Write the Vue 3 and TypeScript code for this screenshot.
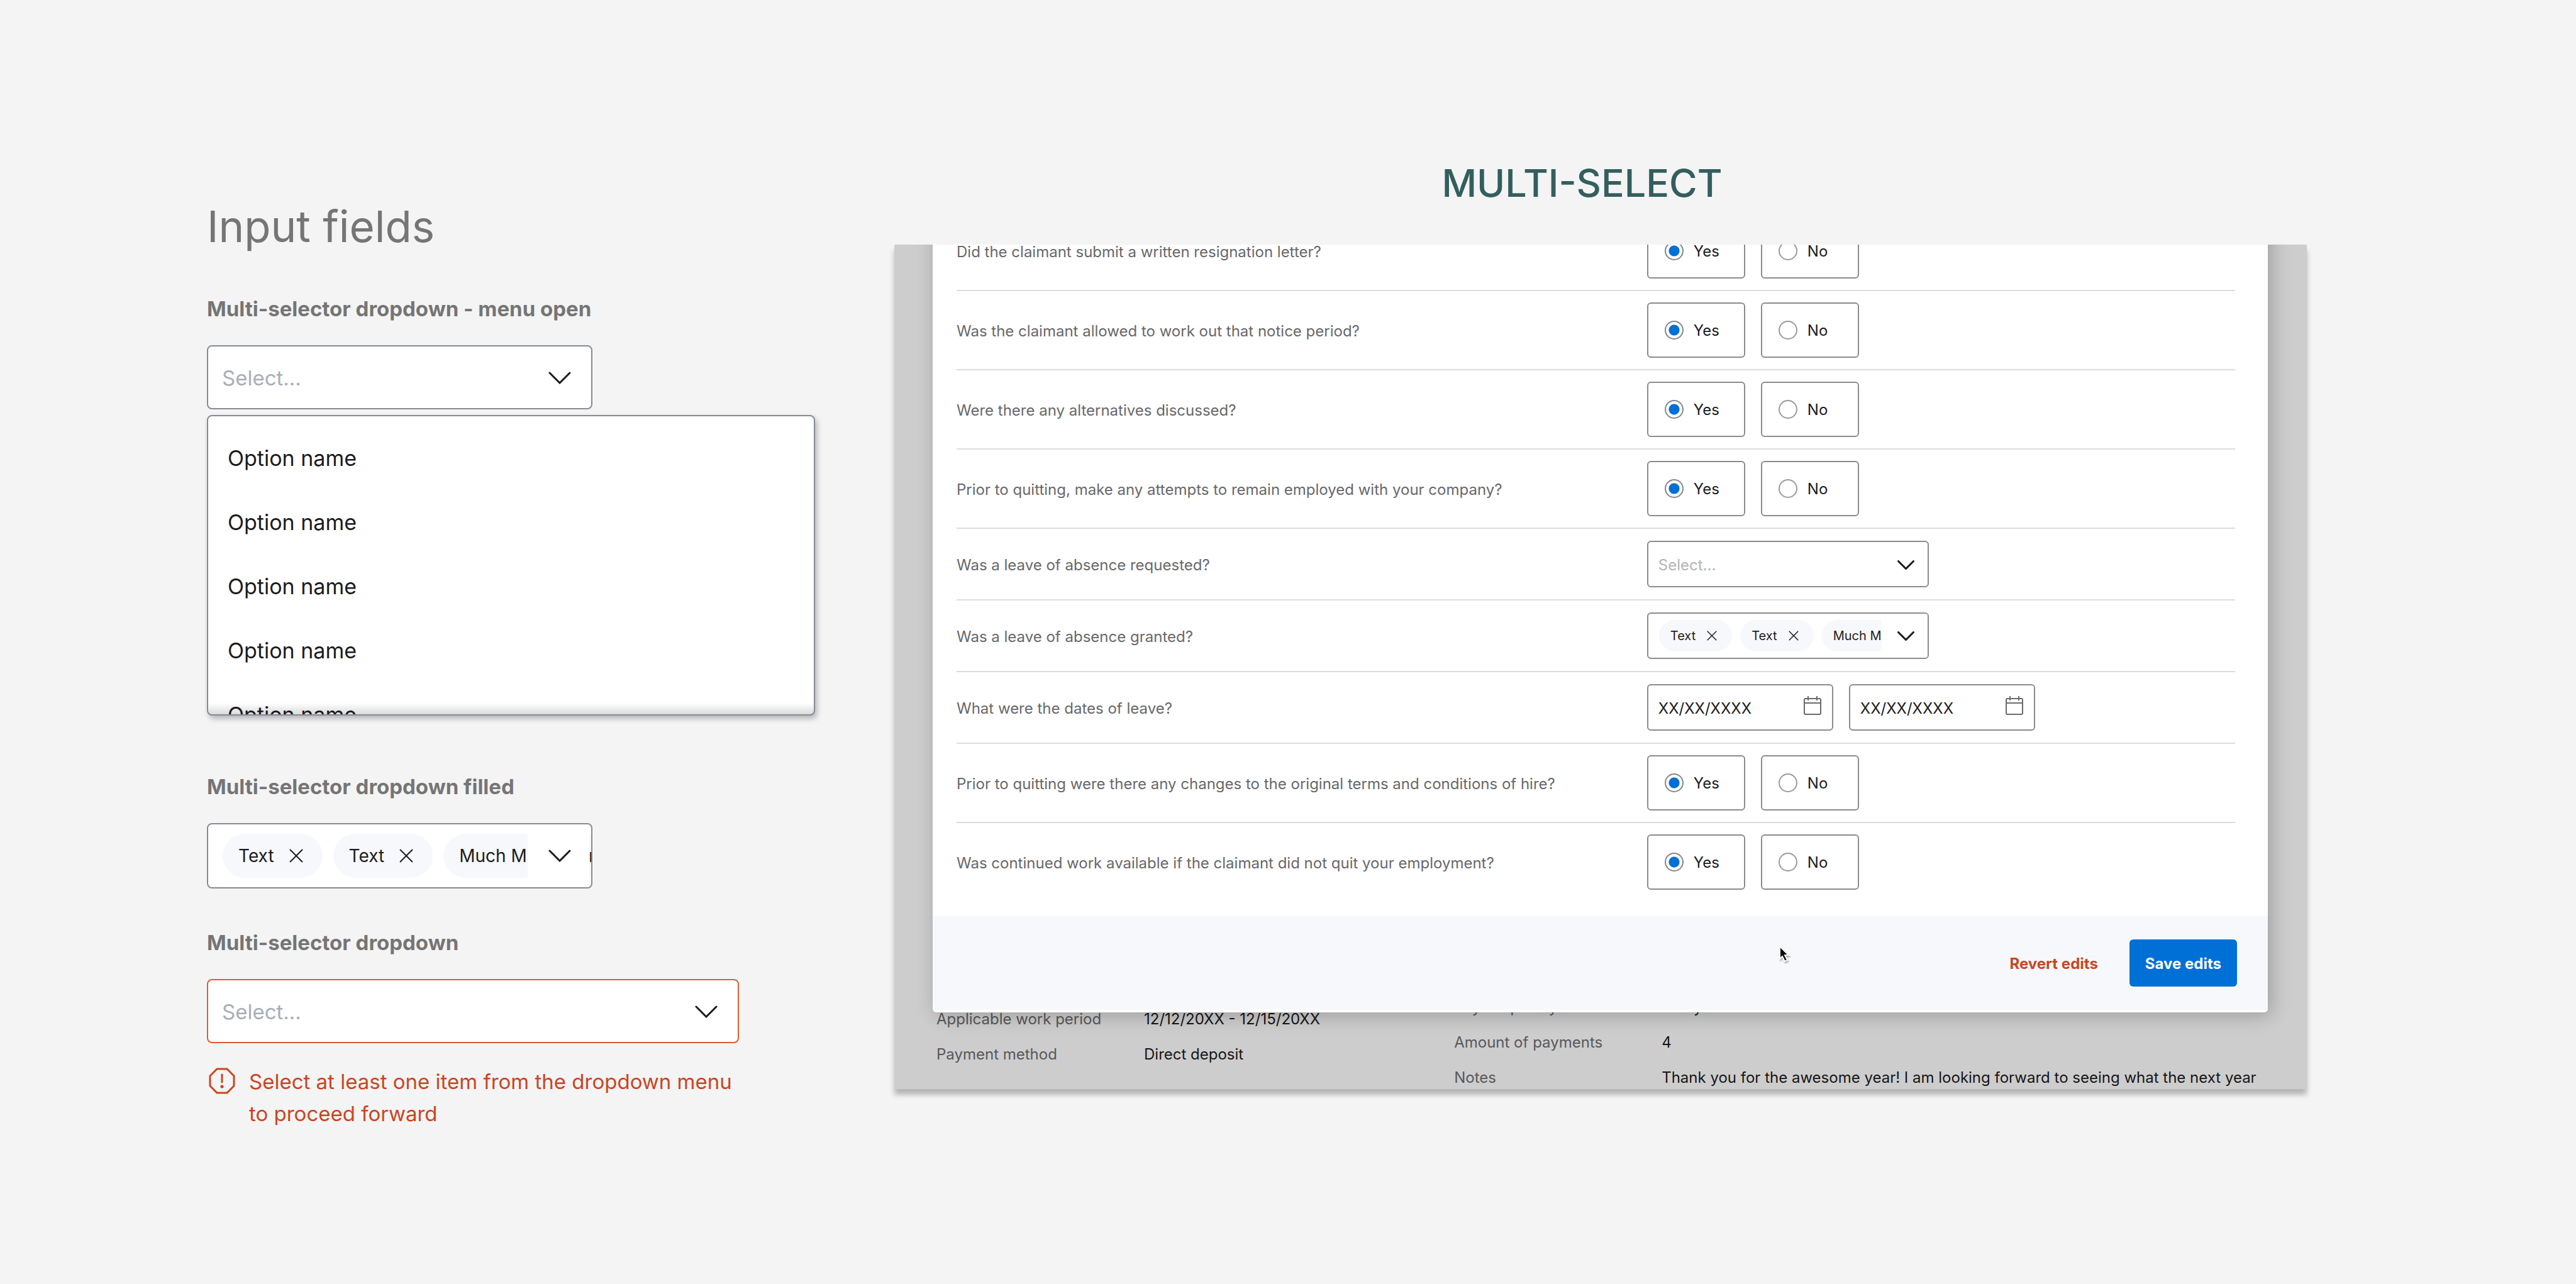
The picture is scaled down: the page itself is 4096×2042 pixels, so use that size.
<script setup lang="ts">
import { ref } from 'vue'

type Kind = 'radio' | 'select' | 'chips' | 'dates'

interface Question {
  id: string
  text: string
  kind: Kind
}

const optionNames: string[] = Array.from({ length: 5 }, () => 'Option name')
const chips: string[] = ['Text', 'Text', 'Much Much more']

const questions: Question[] = [
  { id: 'resignation', text: 'Did the claimant submit a written resignation letter?', kind: 'radio' },
  { id: 'notice', text: 'Was the claimant allowed to work out that notice period?', kind: 'radio' },
  { id: 'alternatives', text: 'Were there any alternatives discussed?', kind: 'radio' },
  { id: 'attempts', text: 'Prior to quitting, make any attempts to remain employed with your company?', kind: 'radio' },
  { id: 'requested', text: 'Was a leave of absence requested?', kind: 'select' },
  { id: 'granted', text: 'Was a leave of absence granted?', kind: 'chips' },
  { id: 'dates', text: 'What were the dates of leave?', kind: 'dates' },
  { id: 'changes', text: 'Prior to quitting were there any changes to the original terms and conditions of hire?', kind: 'radio' },
  { id: 'continued', text: 'Was continued work available if the claimant did not quit your employment?', kind: 'radio' },
]

const answers = ref<Record<string, string>>(
  Object.fromEntries(questions.filter((q) => q.kind === 'radio').map((q) => [q.id, 'Yes'])),
)
const dates = ref<string[]>(['XX/XX/XXXX', 'XX/XX/XXXX'])

const leftDetails: [string, string][] = [
  ['Applicable work period', '12/12/20XX - 12/15/20XX'],
  ['Payment method', 'Direct deposit'],
]
const rightDetails: [string, string][] = [
  ['Pay frequency', 'Every 2 weeks'],
  ['Amount of payments', '4'],
  ['Notes', 'Thank you for the awesome year! I am looking forward to seeing what the next year'],
]
</script>

<template>
  <main class="page">
    <section class="fields">
      <h1 class="title">Input fields</h1>

      <label class="label" for="open-select">Multi-selector dropdown - menu open</label>
      <div class="select-wrap">
        <select id="open-select" class="box select">
          <option>Select...</option>
        </select>
        <svg class="chevron" viewBox="0 0 36 20"><path d="M2 2l16 16L34 2" /></svg>
      </div>
      <ul class="menu" role="listbox" aria-labelledby="open-select">
        <li v-for="(name, i) in optionNames" :key="i" class="option" role="option">{{ name }}</li>
      </ul>

      <span id="filled-label" class="label label-filled">Multi-selector dropdown filled</span>
      <div class="box chip-box" role="group" aria-labelledby="filled-label">
        <span v-for="(chip, i) in chips" :key="i" class="chip">
          {{ chip }}
          <button class="remove" type="button" aria-label="Remove">
            <svg viewBox="0 0 22 22"><path d="M1 1l20 20M21 1L1 21" /></svg>
          </button>
        </span>
        <button class="toggle" type="button" aria-label="Open menu">
          <svg class="chevron" viewBox="0 0 36 20"><path d="M2 2l16 16L34 2" /></svg>
        </button>
      </div>

      <label class="label label-error" for="error-select">Multi-selector dropdown</label>
      <div class="select-wrap wide">
        <select id="error-select" class="box select invalid" aria-describedby="error-text">
          <option>Select...</option>
        </select>
        <svg class="chevron" viewBox="0 0 36 20"><path d="M2 2l16 16L34 2" /></svg>
      </div>
      <div class="error">
        <svg class="error-icon" viewBox="0 0 42 42">
          <path d="M13 2h16l11 11v16L29 40H13L2 29V13z" />
          <path d="M21 11v12" />
          <circle cx="21" cy="30" r="2.6" />
        </svg>
        <p id="error-text" class="error-text">Select at least one item from the dropdown menu to proceed forward</p>
      </div>
    </section>

    <section class="example">
      <h2 class="heading">MULTI-SELECT</h2>
      <div class="backdrop">
        <form class="modal" @submit.prevent>
          <div class="rows">
            <div v-for="q in questions" :key="q.id" class="row">
              <label v-if="q.kind === 'select'" class="question" :for="q.id">{{ q.text }}</label>
              <span v-else :id="`${q.id}-label`" class="question">{{ q.text }}</span>

              <div v-if="q.kind === 'radio'" class="controls" role="radiogroup" :aria-labelledby="`${q.id}-label`">
                <label v-for="choice in ['Yes', 'No']" :key="choice" class="choice">
                  <input v-model="answers[q.id]" class="radio" type="radio" :name="q.id" :value="choice" />
                  {{ choice }}
                </label>
              </div>

              <div v-else-if="q.kind === 'select'" class="controls">
                <div class="select-wrap compact">
                  <select :id="q.id" class="box select">
                    <option>Select...</option>
                  </select>
                  <svg class="chevron" viewBox="0 0 36 20"><path d="M2 2l16 16L34 2" /></svg>
                </div>
              </div>

              <div v-else-if="q.kind === 'chips'" class="controls">
                <div class="box chip-box compact" role="group" :aria-labelledby="`${q.id}-label`">
                  <span v-for="(chip, i) in chips" :key="i" class="chip">
                    {{ chip }}
                    <button class="remove" type="button" aria-label="Remove">
                      <svg viewBox="0 0 22 22"><path d="M1 1l20 20M21 1L1 21" /></svg>
                    </button>
                  </span>
                  <button class="toggle" type="button" aria-label="Open menu">
                    <svg class="chevron" viewBox="0 0 36 20"><path d="M2 2l16 16L34 2" /></svg>
                  </button>
                </div>
              </div>

              <div v-else class="controls">
                <div v-for="(_, i) in dates" :key="i" class="date">
                  <input v-model="dates[i]" class="box date-input" type="text" :aria-labelledby="`${q.id}-label`" />
                  <svg class="calendar" viewBox="0 0 28 30">
                    <path d="M3 4h22a2 2 0 0 1 2 2v21a2 2 0 0 1-2 2H3a2 2 0 0 1-2-2V6a2 2 0 0 1 2-2zM1 11h26M7 0v7M21 0v7" />
                  </svg>
                </div>
              </div>
            </div>
          </div>
          <footer class="footer">
            <button class="revert" type="button">Revert edits</button>
            <button class="save" type="submit">Save edits</button>
            <svg class="cursor" viewBox="0 0 17 26">
              <path d="M1 1v20l4-4 4 8 4-2-4-8h6z" />
            </svg>
          </footer>
        </form>
        <div class="details">
          <dl class="detail-list left">
            <template v-for="[term, value] in leftDetails" :key="term">
              <dt>{{ term }}</dt>
              <dd>{{ value }}</dd>
            </template>
          </dl>
          <dl class="detail-list">
            <template v-for="[term, value] in rightDetails" :key="term">
              <dt>{{ term }}</dt>
              <dd>{{ value }}</dd>
            </template>
          </dl>
        </div>
      </div>
    </section>
  </main>
</template>

<style>
body {
  background: #f4f4f4;
}
</style>

<style scoped>
* {
  box-sizing: border-box;
  margin: 0;
}

.page {
  display: flex;
  gap: 126px;
  min-height: 100vh;
  padding: 0 428px 0 329px;
  background: #f4f4f4;
  color: #1c1c1e;
  font-family: Inter, "Liberation Sans", sans-serif;
  font-size: 24px;
}

button,
input,
select {
  color: inherit;
  font: inherit;
}

button {
  border: 0;
  padding: 0;
  background: none;
}

svg {
  display: block;
  fill: none;
  stroke: currentColor;
}

/* Left column: the field states */

.fields {
  display: flex;
  flex: 0 0 967px;
  flex-direction: column;
  padding-top: 320px;
  font-size: 33px;
}

.title {
  margin-bottom: 71px;
  color: #757575;
  font-size: 69px;
  font-weight: 400;
  line-height: 80px;
}

.label {
  margin-bottom: 38px;
  color: #757575;
  font-size: 33px;
  font-weight: 700;
  line-height: 40px;
}

.label-filled {
  margin-top: 93px;
}

.label-error {
  margin-top: 66px;
}

.box {
  border: 2px solid #858a94;
  border-radius: 8px;
  background: #fff;
}

.select-wrap {
  position: relative;
  width: 613px;
  height: 102px;
}

.select-wrap.wide {
  width: 846px;
}

.select {
  width: 100%;
  height: 100%;
  padding: 2px 22px 0;
  appearance: none;
  color: #a9adb8;
}

.select.invalid {
  border-color: #e25a33;
}

.chevron {
  width: 36px;
  height: 20px;
  color: #1c1c1e;
  stroke-linecap: round;
  stroke-width: 3;
}

.select-wrap .chevron {
  position: absolute;
  top: 42px;
  right: 34px;
  pointer-events: none;
}

.menu {
  position: relative;
  height: 478px;
  margin-top: 9px;
  padding: 16px 31px 0;
  overflow: hidden;
  border: 2px solid #858a94;
  border-radius: 8px;
  background: #fff;
  box-shadow: 3px 5px 8px rgba(20, 20, 40, 0.28);
  font-size: 34px;
  list-style: none;
}

.menu::after {
  position: absolute;
  right: 0;
  bottom: 0;
  left: 0;
  height: 18px;
  background: linear-gradient(rgba(0, 0, 0, 0), rgba(0, 0, 0, 0.14));
  content: "";
}

.option {
  height: 102px;
  line-height: 102px;
}

.chip-box {
  position: relative;
  display: flex;
  align-items: center;
  gap: 17px;
  width: 613px;
  height: 104px;
  padding-left: 23px;
  overflow: hidden;
  font-size: 28px;
}

.chip {
  display: flex;
  flex: none;
  align-items: center;
  gap: 24px;
  height: 70px;
  padding: 0 31px 0 25px;
  border-radius: 35px;
  background: #f7f8fc;
}

.remove {
  width: 22px;
  height: 22px;
  stroke-width: 2;
}

.toggle {
  position: absolute;
  top: 0;
  right: 3px;
  bottom: 0;
  display: flex;
  align-items: center;
  width: 98px;
  padding-left: 33px;
  background: #fff;
}

.error {
  display: flex;
  gap: 22px;
  width: 846px;
  margin-top: 36px;
  padding-left: 3px;
  color: #cb451f;
}

.error-icon {
  flex: none;
  width: 42px;
  height: 42px;
  margin-top: 3px;
  stroke-linecap: round;
  stroke-width: 3;
}

.error-icon circle {
  fill: currentColor;
  stroke: none;
}

.error-text {
  line-height: 51px;
}

/* Right column: the fields used in a dialog */

.example {
  flex: 1;
  min-width: 0;
  padding-top: 255px;
}

.heading {
  margin-bottom: 62px;
  padding-right: 59px;
  color: #335e5e;
  font-size: 61px;
  font-weight: 500;
  line-height: 72px;
  text-align: center;
}

.backdrop {
  overflow: hidden;
  background: #cdcdcd;
  box-shadow: 0 9px 8px rgba(0, 0, 0, 0.26);
}

.modal {
  position: relative;
  z-index: 1;
  margin: -52px 62px 0 61px;
  padding-bottom: 4px;
  border-radius: 6px;
  background: #fff;
  box-shadow: 5px 5px 30px rgba(0, 0, 0, 0.24);
}

.rows {
  padding: 0 52px 24px 38px;
}

.row {
  display: grid;
  grid-template-columns: 54fr 46fr;
  align-items: center;
  padding: 18px 0;
  border-bottom: 2px solid #dcdcdd;
}

.row:has(.compact),
.row:has(.date) {
  padding: 19px 0;
}

.row:last-child {
  border-bottom: 0;
}

.question {
  padding-top: 2px;
  color: #68686a;
}

.controls {
  display: flex;
  gap: 25px;
}

.choice {
  display: flex;
  align-items: center;
  gap: 16px;
  width: 156px;
  height: 88px;
  padding-left: 26px;
  border: 2px solid #8b8b90;
  border-radius: 6px;
}

.radio {
  width: 30px;
  height: 30px;
  margin: 0;
  appearance: none;
  border: 2px solid #9a9a9f;
  border-radius: 50%;
  background: #fff;
}

.radio:checked {
  border-color: #85858c;
  background: radial-gradient(circle, #006fd6 8px, #fff 9px);
}

.controls .box {
  border-color: #8b8b90;
  border-radius: 6px;
}

.select-wrap.compact {
  width: 448px;
  height: 74px;
}

.compact .select {
  padding: 2px 16px 0;
  color: #b4b4b7;
}

.compact .chevron {
  width: 27px;
  height: 15px;
  stroke-width: 4;
}

.select-wrap.compact .chevron {
  top: 31px;
  right: 23px;
}

.chip-box.compact {
  gap: 13px;
  width: 448px;
  height: 74px;
  padding-left: 17px;
  font-size: 20px;
}

.compact .chip {
  gap: 18px;
  height: 50px;
  padding: 0 24px 0 18px;
}

.compact .remove {
  width: 16px;
  height: 16px;
}

.compact .toggle {
  right: 0;
  width: 73px;
  padding-left: 25px;
}

.date {
  position: relative;
  width: 296px;
  height: 74px;
}

.date-input {
  width: 100%;
  height: 100%;
  padding: 2px 16px 0;
}

.calendar {
  position: absolute;
  top: 19px;
  right: 19px;
  width: 28px;
  height: 30px;
  color: #6a6a6c;
  stroke-width: 2;
}

.footer {
  position: relative;
  display: flex;
  align-items: center;
  justify-content: flex-end;
  gap: 50px;
  height: 149px;
  padding-right: 49px;
  background: #f7f8fc;
  font-weight: 700;
}

.revert {
  padding-top: 2px;
  color: #cb451f;
}

.save {
  height: 75px;
  padding: 2px 25px 0;
  border-radius: 6px;
  background: #006fd6;
  color: #fff;
}

.cursor {
  position: absolute;
  top: 47px;
  left: 63.4%;
  width: 17px;
  height: 26px;
  overflow: visible;
  fill: #000;
  filter: drop-shadow(1px 2px 1px rgba(0, 0, 0, 0.35));
  stroke: #fff;
  stroke-width: 2;
}

.details {
  display: grid;
  grid-template-columns: 17fr 28fr;
  margin: -36px 0 -10px;
  padding-left: 67px;
  line-height: 56px;
}

.detail-list {
  display: grid;
  grid-template-columns: 330px 1fr;
  align-content: start;
}

.detail-list.left {
  padding-top: 19px;
}

dt {
  color: #58585a;
}

dd {
  color: #161617;
  white-space: nowrap;
}
</style>
